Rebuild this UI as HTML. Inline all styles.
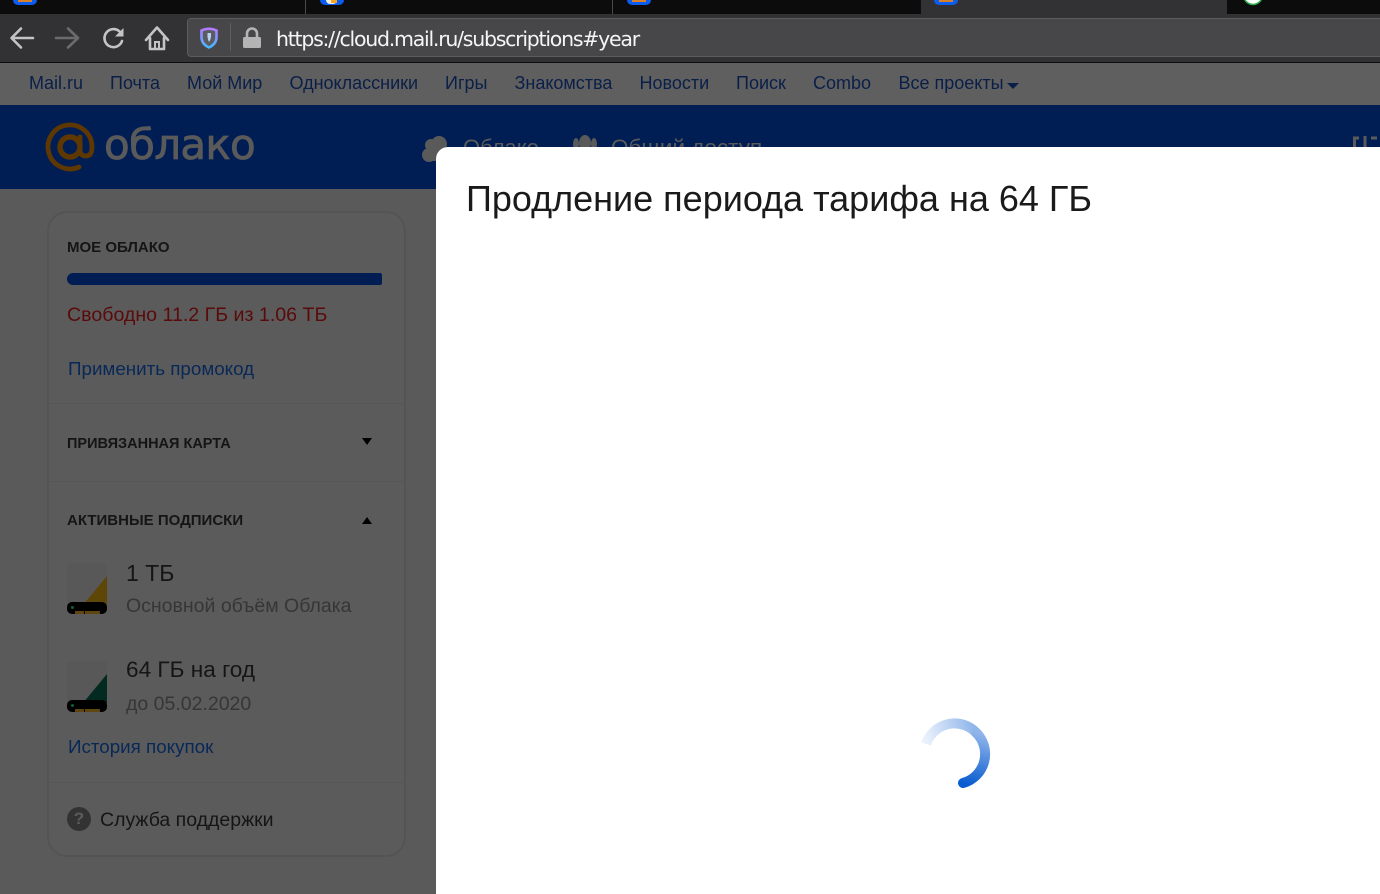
<!DOCTYPE html>
<html lang="ru"><head><meta charset="utf-8"><title>Облако</title>
<style>
html,body{margin:0;padding:0;width:1380px;height:894px;overflow:hidden;background:#5a5a5a}
body{position:relative;font-family:"Liberation Sans","Noto Sans CJK SC",sans-serif}
.a{position:absolute;white-space:nowrap}
.n{top:72px;font-size:18px;line-height:22px;color:#0a1f48}
.t{font-size:14.5px;font-weight:bold;line-height:18px;color:#151515}
svg{position:absolute;overflow:visible}
</style></head><body>
<div class="a" style="left:0;top:0;width:1380px;height:14px;background:#0c0c0d"></div>
<div class="a" style="left:305px;top:0;width:1px;height:14px;background:#4a4a4c"></div>
<div class="a" style="left:612px;top:0;width:1px;height:14px;background:#4a4a4c"></div>
<div class="a" style="left:921px;top:0;width:306px;height:14px;background:#323234"></div>
<div class="a" style="left:13px;top:0;width:24px;height:5px;background:#0b5cf0;border-radius:0 0 5px 5px"></div>
<div class="a" style="left:18px;top:0;width:14px;height:2px;background:#d9802a"></div>
<div class="a" style="left:320px;top:0;width:24px;height:5px;background:#0b5cf0;border-radius:0 0 5px 5px"></div>
<div class="a" style="left:326px;top:0;width:11px;height:4px;background:#f5f0e0;border-radius:0 0 6px 6px"></div>
<div class="a" style="left:331px;top:0;width:6px;height:3px;background:#f5a623"></div>
<div class="a" style="left:627px;top:0;width:24px;height:5px;background:#0b5cf0;border-radius:0 0 5px 5px"></div>
<div class="a" style="left:632px;top:0;width:14px;height:2px;background:#d9802a"></div>
<div class="a" style="left:934px;top:0;width:24px;height:5px;background:#0b5cf0;border-radius:0 0 5px 5px"></div>
<div class="a" style="left:939px;top:0;width:14px;height:2px;background:#d9802a"></div>
<svg style="left:1242px;top:0" width="22" height="6"><circle cx="11" cy="-5" r="9.500" fill="#fff" stroke="#2aa84a" stroke-width="1.500"/></svg>
<div class="a" style="left:0;top:14px;width:1380px;height:48px;background:#323234"></div>
<div class="a" style="left:0;top:62px;width:1380px;height:1px;background:#0c0c0d"></div>
<svg style="left:0;top:14px" width="190" height="48" fill="none">
<path d="M33 24H12M21 14.500L11.500 24L21 33.500" stroke="#c4c4c4" stroke-width="2.600" stroke-linecap="round" stroke-linejoin="round"/>
<path d="M56 24H78M68 14.500L78 24L68 33.500" stroke="#6b6b6d" stroke-width="2.600" stroke-linecap="round" stroke-linejoin="round"/>
<path d="M122 27A9 9 0 1 1 119 17L122 20" stroke="#c4c4c4" stroke-width="2.600" stroke-linecap="round"/>
<path d="M123.500 14V22.500H115Z" fill="#c4c4c4"/>
<path d="M146 26L157 13.500L168 26M150 24V35H164V24" stroke="#c4c4c4" stroke-width="2.600" stroke-linejoin="round" stroke-linecap="round"/>
<path d="M155 35V28H159V35" stroke="#c4c4c4" stroke-width="2"/>
</svg>
<div class="a" style="left:187px;top:18px;width:1200px;height:39px;box-sizing:border-box;background:#474749;border:1px solid #5c5c5e;border-radius:4px"></div>
<div class="a" style="left:230px;top:23px;width:1px;height:28px;background:#5f5f62"></div>
<svg style="left:200px;top:27px" width="18" height="22" fill="none">
<defs><linearGradient id="s" x1="0" y1="0" x2="0" y2="1"><stop offset="0" stop-color="#b57bff"/><stop offset="1" stop-color="#45b8ff"/></linearGradient></defs>
<path d="M1.500 3.500Q9 0 16.500 3.500V10Q16.500 17 9 20.500Q1.500 17 1.500 10Z" stroke="url(#s)" stroke-width="2.600" fill="#c8d8f0" fill-opacity=".15"/>
<path d="M7.500 6H11V10Q10.500 13 9 15Q8 13 7.500 10Z" fill="#b8d0f0"/>
</svg>
<svg style="left:243px;top:27px" width="18" height="22" fill="none">
<path d="M4 10V6.500A5 5 0 0 1 14 6.500V10" stroke="#b4b4b4" stroke-width="2.600"/>
<rect x="0" y="10" width="18" height="11" rx="1.500" fill="#b4b4b4"/>
</svg>
<div class="a" style="left:276px;top:25px;font-size:20.500px;line-height:28px;color:#f5f5f5;font-family:'DejaVu Sans',sans-serif;letter-spacing:-1.250px">https://cloud.mail.ru/subscriptions#year</div>
<div class="a" style="left:0;top:63px;width:1380px;height:42px;background:#5f5f5f"></div>
<div class="a n" style="left:29px">Mail.ru</div>
<div class="a n" style="left:110px">Почта</div>
<div class="a n" style="left:187px">Мой Мир</div>
<div class="a n" style="left:289.500px">Одноклассники</div>
<div class="a n" style="left:445px">Игры</div>
<div class="a n" style="left:514.500px">Знакомства</div>
<div class="a n" style="left:639.500px">Новости</div>
<div class="a n" style="left:736px">Поиск</div>
<div class="a n" style="left:813px">Combo</div>
<div class="a n" style="left:898.500px">Все проекты</div>
<div class="a" style="left:1007px;top:83px;width:0;height:0;border:6px solid transparent;border-top:6px solid #0a1f48;border-bottom:0"></div>
<div class="a" style="left:0;top:105px;width:1380px;height:84px;background:#001e54"></div>
<svg style="left:46px;top:123px" width="50" height="50" fill="none">
<circle cx="24" cy="24" r="10" stroke="#5e3800" stroke-width="5.500"/>
<path d="M34 14V27Q34 33 40 33Q46 33 46 24A22 22 0 1 0 33 44" stroke="#5e3800" stroke-width="4.800" stroke-linecap="round"/>
</svg>
<div class="a" style="left:104px;top:120px;font-size:42px;line-height:50px;color:#5a5a5a;font-family:'DejaVu Sans',sans-serif;letter-spacing:-.7px;-webkit-text-stroke:.8px #5a5a5a">облако</div>
<svg style="left:421px;top:133px" width="30" height="28" fill="#5a5a5a"><circle cx="8" cy="22" r="7"/><circle cx="10" cy="12" r="6"/><circle cx="18" cy="11" r="8"/><circle cx="24" cy="20" r="6"/><rect x="8" y="14" width="16" height="14"/></svg>
<div class="a" style="left:463px;top:135px;font-size:22px;line-height:26px;color:#5a5a5a">Облако</div>
<svg style="left:572px;top:135px" width="26" height="14" fill="#5a5a5a"><ellipse cx="13" cy="8" rx="6" ry="8"/><ellipse cx="4" cy="9" rx="3" ry="6"/><ellipse cx="22" cy="9" rx="3" ry="6"/></svg>
<div class="a" style="left:611px;top:135px;font-size:22.500px;line-height:26px;color:#5a5a5a">Общий доступ</div>
<svg style="left:1353px;top:135px" width="27" height="14" fill="none"><path d="M1.500 14V3H6M12 1V14M18 3H24" stroke="#5a5a5a" stroke-width="3"/></svg>
<div class="a" style="left:47px;top:211px;width:359px;height:646px;box-sizing:border-box;border:2px solid #545454;border-radius:20px;background:#5b5b5b"></div>
<div class="a t" style="left:67px;top:239px;font-size:15px">МОЕ ОБЛАКО</div>
<div class="a" style="left:67px;top:273px;width:315px;height:12px;background:#001e54;border-radius:6px 2px 2px 6px"></div>
<div class="a" style="left:67px;top:303px;font-size:19.600px;line-height:24px;color:#5a0a0a">Свободно 11.2 ГБ из 1.06 ТБ</div>
<div class="a" style="left:68px;top:357px;font-size:18.800px;line-height:24px;color:#082858">Применить промокод</div>
<div class="a" style="left:49px;top:403px;width:355px;height:1px;background:#565656"></div>
<div class="a t" style="left:67px;top:435px">ПРИВЯЗАННАЯ КАРТА</div>
<div class="a" style="left:362px;top:438px;width:0;height:0;border:5px solid transparent;border-top:7px solid #000;border-bottom:0"></div>
<div class="a" style="left:49px;top:481px;width:355px;height:1px;background:#565656"></div>
<div class="a t" style="left:67px;top:512px;font-size:15px">АКТИВНЫЕ ПОДПИСКИ</div>
<div class="a" style="left:362px;top:517px;width:0;height:0;border:5px solid transparent;border-bottom:7px solid #000;border-top:0"></div>
<svg style="left:67px;top:563px" width="40" height="51">
<path d="M4 0H36Q40 0 40 4V44H0V4Q0 0 4 0Z" fill="#585858"/>
<path d="M40 13V42H16Z" fill="#5e4607"/>
<rect x="0" y="39" width="40" height="12" rx="5" fill="#000"/>
<rect x="8" y="48" width="9" height="3" fill="#5f4510"/><rect x="18" y="48" width="15" height="3" fill="#5f4510"/>
<circle cx="5.500" cy="44.500" r="1.500" fill="#0a6038"/>
</svg>
<div class="a" style="left:126px;top:559px;font-size:23px;line-height:28px;color:#151515">1 ТБ</div>
<div class="a" style="left:126px;top:594px;font-size:19.500px;line-height:24px;color:#363636">Основной объём Облака</div>
<svg style="left:67px;top:661px" width="40" height="51">
<path d="M4 0H36Q40 0 40 4V44H0V4Q0 0 4 0Z" fill="#585858"/>
<path d="M40 13V42H16Z" fill="#022a20"/>
<rect x="0" y="39" width="40" height="12" rx="5" fill="#000"/>
<rect x="8" y="48" width="9" height="3" fill="#5f4510"/><rect x="18" y="48" width="15" height="3" fill="#5f4510"/>
<circle cx="5.500" cy="44.500" r="1.500" fill="#0a6038"/>
</svg>
<div class="a" style="left:126px;top:656px;font-size:22.600px;line-height:28px;color:#151515">64 ГБ на год</div>
<div class="a" style="left:126px;top:692px;font-size:19.500px;line-height:24px;color:#363636">до 05.02.2020</div>
<div class="a" style="left:68px;top:735px;font-size:18.800px;line-height:24px;color:#082858">История покупок</div>
<div class="a" style="left:49px;top:782px;width:355px;height:1px;background:#565656"></div>
<svg style="left:67px;top:807px" width="24" height="24"><circle cx="12" cy="12" r="12" fill="#333"/></svg>
<div class="a" style="left:67px;top:807px;width:24px;line-height:24px;font-size:17px;font-weight:bold;color:#5c5c5c;text-align:center">?</div>
<div class="a" style="left:100px;top:808px;font-size:19.500px;line-height:24px;color:#151515">Служба поддержки</div>
<div class="a" style="left:436px;top:147px;width:960px;height:760px;background:#fff;border-radius:12px 0 0 0"></div>
<div class="a" style="left:466px;top:178px;font-size:36px;line-height:42px;color:#1a1a1a">Продление периода тарифа на 64 ГБ</div>
<svg style="left:915px;top:714px" width="80" height="80" fill="none">
<defs>
<linearGradient id="g1" gradientUnits="userSpaceOnUse" x1="12" y1="30" x2="61" y2="19"><stop offset="0" stop-color="#eaf1fb"/><stop offset="1" stop-color="#8fb5ea"/></linearGradient>
<linearGradient id="g2" gradientUnits="userSpaceOnUse" x1="61" y1="19" x2="48" y2="69"><stop offset="0" stop-color="#8fb5ea"/><stop offset="1" stop-color="#0a5cd0"/></linearGradient>
</defs>
<path d="M11 30A30 30 0 0 1 61.500 19" stroke="url(#g1)" stroke-width="10"/>
<path d="M61 18.500A30 30 0 0 1 48 69" stroke="url(#g2)" stroke-width="10" stroke-linecap="round"/>
</svg>
</body></html>
